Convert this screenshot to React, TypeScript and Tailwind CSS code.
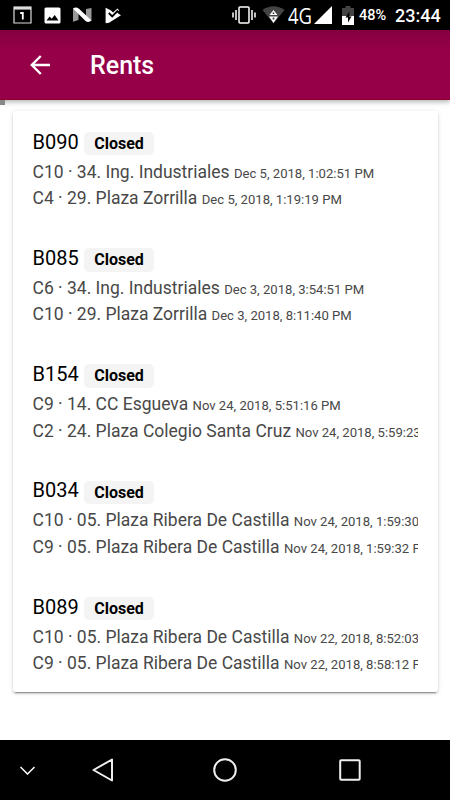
const rents = [
  { bike: 'B090', stops: [['C10 · 34. Ing. Industriales', 'Dec 5, 2018, 1:02:51 PM'], ['C4 · 29. Plaza Zorrilla', 'Dec 5, 2018, 1:19:19 PM']] },
  { bike: 'B085', stops: [['C6 · 34. Ing. Industriales', 'Dec 3, 2018, 3:54:51 PM'], ['C10 · 29. Plaza Zorrilla', 'Dec 3, 2018, 8:11:40 PM']] },
  { bike: 'B154', stops: [['C9 · 14. CC Esgueva', 'Nov 24, 2018, 5:51:16 PM'], ['C2 · 24. Plaza Colegio Santa Cruz', 'Nov 24, 2018, 5:59:23 PM']] },
  { bike: 'B034', stops: [['C10 · 05. Plaza Ribera De Castilla', 'Nov 24, 2018, 1:59:30 PM'], ['C9 · 05. Plaza Ribera De Castilla', 'Nov 24, 2018, 1:59:32 PM']] },
  { bike: 'B089', stops: [['C10 · 05. Plaza Ribera De Castilla', 'Nov 22, 2018, 8:52:03 PM'], ['C9 · 05. Plaza Ribera De Castilla', 'Nov 22, 2018, 8:58:12 PM']] },
];

function StatusBar() {
  return (
    <div className="flex h-[30px] shrink-0 items-center bg-black text-white">
      <svg className="ml-[13px] h-[18px] w-[19px]" viewBox="0 0 19 18" fill="none">
        <path d="M1 1h17v16H1z" stroke="#ddd" strokeWidth="1.2" />
        <path d="M1 2.2h17" stroke="#ddd" strokeWidth="2.8" />
        <path d="M7.2 7h2.6v6.5" stroke="#fff" strokeWidth="1.8" />
      </svg>
      <svg className="ml-3 h-[17px] w-[17px]" viewBox="0 0 17 17">
        <path fill="#fff" fillRule="evenodd" d="M2 .5h13a1.5 1.5 0 0 1 1.500 1.500v13a1.500 1.500 0 0 1-1.500 1.500H2A1.500 1.500 0 0 1 .5 15V2A1.500 1.500 0 0 1 2 .5ZM2.500 13.500h12L10.700 8l-3 3.800-2-2.400Z" />
      </svg>
      <svg className="ml-3 h-[16px] w-[19px]" viewBox="0 0 19 16">
        <path d="M0 1.500 5.500 3v10L0 14.800ZM13 2l5.500-1v12.500L13 12Z" fill="#999" />
        <path d="M0 1.500Q3-.5 6 1.800l12.500 11.700q-3 2.500-6 .5Z" fill="#fff" />
      </svg>
      <svg className="ml-[13px] h-[17px] w-[17px]" viewBox="0 0 17 17">
        <path d="M.6.8 6 3.500l2 2L12.500 1.500l1.500 1.700-2 2.500L16 8.300 4 15.800.6 16.300Z" fill="#fff" />
        <path d="m3.800 6 3.400 3.400L13 3.500" stroke="#000" strokeWidth="1.800" fill="none" />
      </svg>
      <svg className="ml-[110px] h-[18px] w-[24px]" viewBox="0 0 24 18" fill="none" stroke="#fff" strokeWidth="1.500">
        <rect x="7" y="1" width="10" height="16" rx="1" />
        <path d="M4 4v10M20 4v10M1 6.500v5M23 6.500v5" />
      </svg>
      <svg className="ml-[6px] h-[18px] w-[23px]" viewBox="0 0 23 18">
        <path d="M.5 4Q11.500-3.500 22.500 4l-11 13.500Z" fill="#444" />
        <path d="M11.500 4 15.500 9h-8ZM7 10.500h9l-4.500 6.500Z" fill="#fff" />
        <path d="M11.500 6.500v1.500M11.500 11.500v2" stroke="#333" strokeWidth="1.600" />
      </svg>
      <span className="ml-[3px] w-[25px] origin-left scale-x-[.84] whitespace-nowrap font-['Open_Sans',sans-serif] text-[22px] leading-[30px]">4G</span>
      <svg className="ml-px h-[18px] w-[18px]" viewBox="0 0 18 18"><path d="M18 0v18H0Z" fill="#fff" /></svg>
      <svg className="ml-[10px] h-[19px] w-[12px]" viewBox="0 0 12 19">
        <path d="M3.500 0h5v2H12v17H0V2h3.500Z" fill="#444" />
        <path d="M0 10h12v9H0Z" fill="#fff" />
        <path d="m7.500 5.500-4 6h2.500V16.500l3.600-6H7.200Z" fill="#000" />
      </svg>
      <span className="ml-[5px] w-[28px] whitespace-nowrap pt-[2px] text-[14.5px] font-medium">48%</span>
      <span className="ml-[8px] whitespace-nowrap text-[18px] font-medium">23:44</span>
    </div>
  );
}

export default function App() {
  return (
    <div className="flex h-[800px] w-[450px] flex-col overflow-hidden bg-white font-[Roboto,sans-serif]">
      <StatusBar />
      <header className="relative flex h-[70px] shrink-0 items-center border-b border-[#8d0026] bg-linear-to-b from-[#850040] to-[#960048] to-30% text-white shadow-[0_2px_5px_rgba(0,0,0,0.3)]">
        <svg className="ml-[30px] h-5 w-5" viewBox="0 0 20 20" fill="none" stroke="#fff" strokeWidth="2.400">
          <path d="M20 10H2M10.800 1 1.800 10l9 9" />
        </svg>
        <h1 className="ml-10 pt-[2px] text-[25px] font-medium">Rents</h1>
        <span className="absolute left-0 top-[70px] h-[5px] w-[5px] bg-[#888]" />
      </header>
      <main className="flex-1 px-[12.5px] pt-[11px]">
        <section className="h-[581px] rounded-[3px] bg-white px-5 pt-[15.500px] shadow-[0_3px_1px_-2px_rgba(0,0,0,0.3),0_2px_2px_rgba(0,0,0,0.14),0_1px_5px_rgba(0,0,0,0.12)]">
          {rents.map((rent) => (
            <article key={rent.bike} className="h-[116.25px] overflow-hidden">
              <div className="flex h-[32px] items-center">
                <h2 className="w-[51.5px] pb-[2px] text-[20px] leading-[28px] text-black">{rent.bike}</h2>
                <span className="mt-[2px] h-[23.5px] w-[70px] rounded-[5px] bg-[#f4f4f4] text-center text-[16px] font-bold leading-[23.5px] text-black">Closed</span>
              </div>
              {rent.stops.map(([place, date]) => (
                <p key={place} className="h-[26.7px] overflow-hidden whitespace-nowrap text-[17.5px] leading-[26.7px] text-[#484848]">
                  {place} <span className="text-[13.1px]">{date}</span>
                </p>
              ))}
            </article>
          ))}
        </section>
      </main>
      <nav className="flex h-[60px] shrink-0 items-center bg-black">
        <svg className="ml-5 h-[9px] w-[15px]" viewBox="0 0 15 9" fill="none" stroke="#fff" strokeWidth="1.500"><path d="m.5 1 7 7 7-7" /></svg>
        <svg className="ml-[57px] h-6 w-[22px]" viewBox="0 0 22 24" fill="none" stroke="#eee" strokeWidth="2" strokeLinejoin="round"><path d="M20 1.500v21L1.500 12Z" /></svg>
        <svg className="ml-[99px] h-6 w-6" viewBox="0 0 24 24" fill="none" stroke="#eee" strokeWidth="2"><circle cx="12" cy="12" r="10.800" /></svg>
        <svg className="ml-[102px] h-[22px] w-[22px]" viewBox="0 0 22 22" fill="none" stroke="#eee" strokeWidth="2"><rect x="1.200" y="1.200" width="19.500" height="19.500" rx="1" /></svg>
      </nav>
    </div>
  );
}
